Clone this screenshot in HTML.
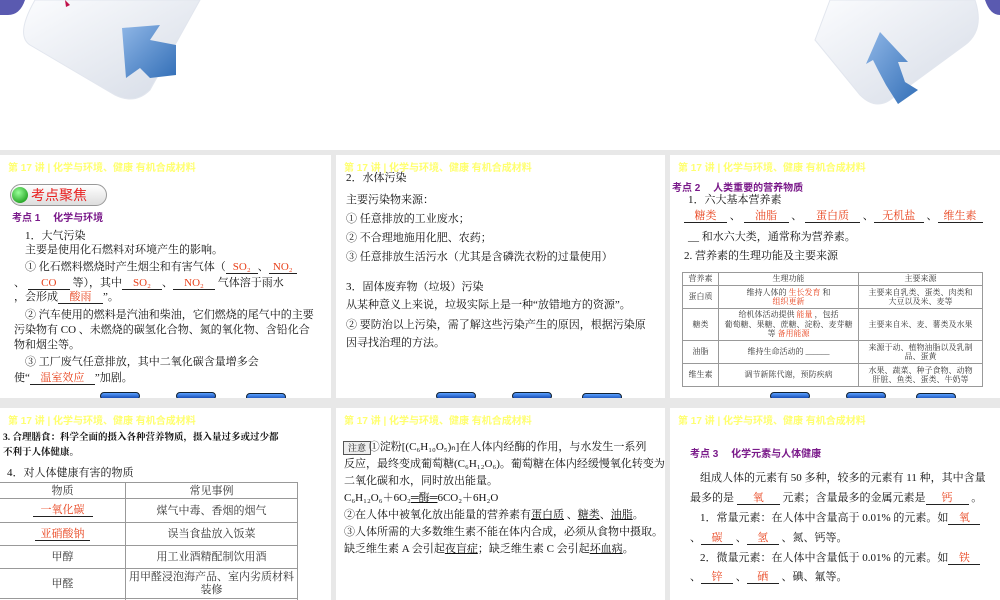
<!DOCTYPE html>
<html><head><meta charset="utf-8"><style>
*{margin:0;padding:0;box-sizing:border-box}
body{width:1000px;height:600px;overflow:hidden;background:#e8e8e8;font-family:"Liberation Serif","Noto Serif CJK SC","Noto Sans CJK SC",serif;color:#111;position:relative}
.top{position:absolute;left:0;top:0;width:1000px;height:150px;background:#fff}
.p{position:absolute;background:#fff;overflow:hidden}
.hd{position:absolute;left:8px;top:4px;font:bold 10px "Liberation Sans","Noto Sans CJK SC",sans-serif;color:#ffff70;white-space:nowrap}
.t{position:absolute;font-size:11px;line-height:18px;white-space:nowrap}
.pur{color:#7a1a8a;font-weight:bold;font-family:"Liberation Sans","Noto Sans CJK SC",sans-serif}
.r{color:#e8401a}
.u{display:inline-block;border-bottom:1px solid #222;text-align:center;line-height:12px;vertical-align:baseline}
.btn{position:absolute;width:40px;height:8px;border-radius:4px;background:linear-gradient(#5aa0ff,#0a3ea8);border:1px solid #123}
table{border-collapse:collapse;position:absolute;table-layout:fixed}
td{border:1px solid #999;text-align:center;font-size:9px;line-height:10px;color:#333;padding:0;white-space:nowrap;overflow:hidden}
.tb td{font-size:8px;line-height:9.5px}
</style></head><body>
<div class="top">
<svg width="1000" height="150" viewBox="0 0 1000 150">
<defs><linearGradient id="s" x1="0" y1="0" x2="1" y2="1"><stop offset="0" stop-color="#fbfcfe"/><stop offset="1" stop-color="#d5dbe6"/></linearGradient>
<linearGradient id="b" x1="0" y1="0" x2="1" y2="1"><stop offset="0" stop-color="#8fb6e6"/><stop offset="1" stop-color="#3470b8"/></linearGradient></defs>
<path d="M0 0 L25 0 Q20 15 8 15 L0 15Z" fill="#5a5ab0"/>
<path d="M35 0 L200 0 L150 90 Q135 105 115 95 L30 45 Q15 35 35 0Z" fill="url(#s)" stroke="#e2e6ee"/>
<path d="M122 28 L160 25 L150 40 L176 45 L176 75 L150 78 L140 68 L126 78Z" fill="url(#b)"/>
<path d="M1000 0 L1000 15 Q990 15 985 0Z" fill="#5a5ab0"/>
<path d="M830 0 L975 0 Q985 30 965 45 L890 100 Q875 110 860 95 L815 40Z" fill="url(#s)" stroke="#e2e6ee"/>
<path d="M880 32 L908 62 L898 62 L905 82 L918 90 L898 104 L886 85 L878 70 L873 60 L866 64Z" fill="url(#b)"/>
<path d="M65 0 L70 5 L66 7Z" fill="#c0104a"/>
</svg>
</div>

<!-- Panel 1 -->
<div class="p" style="left:0;top:155px;width:331px;height:243px">
<div class="hd">第 17 讲 | 化学与环境、健康 有机合成材料</div>
<div style="position:absolute;left:10px;top:29px;width:97px;height:22px;border:1px solid #999;border-radius:11px;background:linear-gradient(#fff,#ddd)"></div>
<div style="position:absolute;left:12px;top:32px;width:16px;height:16px;border-radius:50%;background:radial-gradient(circle at 40% 35%,#9f9,#080)"></div>
<div style="position:absolute;left:31px;top:30px;font:14px 'Noto Sans CJK SC',sans-serif;color:#e82020">考点聚焦</div>
<div class="t pur" style="left:12px;top:55px;font-size:10px">考点 1 　化学与环境</div>
<div class="t" style="left:25px;top:72px">1．大气污染</div>
<div class="t" style="left:25px;top:86px">主要是使用化石燃料对环境产生的影响。</div>
<div class="t" style="left:25px;top:103px">① 化石燃料燃烧时产生烟尘和有害气体（<span class="u r" style="width:32px">SO₂</span>、<span class="u r" style="width:28px">NO₂</span></div>
<div class="t" style="left:14px;top:119px">、 <span class="u r" style="width:42px">CO</span> 等），其中<span class="u r" style="width:40px">SO₂</span>、<span class="u r" style="width:42px">NO₂</span> 气体溶于雨水</div>
<div class="t" style="left:14px;top:133px">，会形成<span class="u r" style="width:45px">酸雨</span>”。</div>
<div class="t" style="left:25px;top:151px">② 汽车使用的燃料是汽油和柴油，它们燃烧的尾气中的主要</div>
<div class="t" style="left:14px;top:166px">污染物有 CO 、未燃烧的碳氢化合物、氮的氧化物、含铅化合</div>
<div class="t" style="left:14px;top:181px">物和烟尘等。</div>
<div class="t" style="left:25px;top:198px">③ 工厂废气任意排放，其中二氧化碳含量增多会</div>
<div class="t" style="left:14px;top:214px">使“<span class="u r" style="width:65px">温室效应</span>”加剧。</div>
<div class="btn" style="left:100px;top:237px"></div><div class="btn" style="left:176px;top:237px"></div><div class="btn" style="left:246px;top:238px"></div>
</div>

<!-- Panel 2 -->
<div class="p" style="left:336px;top:155px;width:329px;height:243px">
<div class="hd">第 17 讲 | 化学与环境、健康 有机合成材料</div>
<div class="t" style="left:10px;top:14px">2．水体污染</div>
<div class="t" style="left:10px;top:36px">主要污染物来源：</div>
<div class="t" style="left:10px;top:55px">① 任意排放的工业废水；</div>
<div class="t" style="left:10px;top:74px">② 不合理地施用化肥、农药；</div>
<div class="t" style="left:10px;top:93px">③ 任意排放生活污水（尤其是含磷洗衣粉的过量使用）</div>
<div class="t" style="left:10px;top:123px">3．固体废弃物（垃圾）污染</div>
<div class="t" style="left:10px;top:141px">从某种意义上来说，垃圾实际上是一种“放错地方的资源”。</div>
<div class="t" style="left:10px;top:161px">② 要防治以上污染，需了解这些污染产生的原因，根据污染原</div>
<div class="t" style="left:10px;top:179px">因寻找治理的方法。</div>
<div class="btn" style="left:100px;top:237px"></div><div class="btn" style="left:176px;top:237px"></div><div class="btn" style="left:246px;top:238px"></div>
</div>

<!-- Panel 3 -->
<div class="p" style="left:670px;top:155px;width:330px;height:243px">
<div class="hd">第 17 讲 | 化学与环境、健康 有机合成材料</div>
<div class="t pur" style="left:2px;top:25px;font-size:10px">考点 2 　人类重要的营养物质</div>
<div class="t" style="left:18px;top:36px">1．六大基本营养素</div>
<div class="t" style="left:14px;top:52px"><span class="u r" style="width:43px">糖类</span> 、 <span class="u r" style="width:45px">油脂</span> 、 <span class="u r" style="width:55px">蛋白质</span> 、<span class="u r" style="width:50px">无机盐</span> 、<span class="u r" style="width:45px">维生素</span></div>
<div class="t" style="left:18px;top:73px">__ 和水六大类，通常称为营养素。</div>
<div class="t" style="left:14px;top:92px">2. 营养素的生理功能及主要来源</div>
<table class="tb" style="left:12px;top:117px;width:301px">
<colgroup><col style="width:36px"><col style="width:140px"><col></colgroup>
<tr style="height:13px"><td>营养素</td><td>生理功能</td><td>主要来源</td></tr>
<tr style="height:23px"><td>蛋白质</td><td>维持人体的 <span class="r">生长发育</span> 和<br><span class="r">组织更新</span></td><td>主要来自乳类、蛋类、肉类和<br>大豆以及米、麦等</td></tr>
<tr style="height:32px"><td>糖类</td><td>给机体活动提供 <span class="r">能量</span> ，包括<br>葡萄糖、果糖、蔗糖、淀粉、麦芽糖<br>等 <span class="r">备用能源</span></td><td>主要来自米、麦、薯类及水果</td></tr>
<tr style="height:23px"><td>油脂</td><td>维持生命活动的 ______</td><td>来源于动、植物油脂以及乳制<br>品、蛋黄</td></tr>
<tr style="height:23px"><td>维生素</td><td>调节新陈代谢，预防疾病</td><td>水果、蔬菜、种子食物、动物<br>肝脏、鱼类、蛋类、牛奶等</td></tr>
</table>
<div class="btn" style="left:100px;top:237px"></div><div class="btn" style="left:176px;top:237px"></div><div class="btn" style="left:246px;top:238px"></div>
</div>

<!-- Row 2 -->
<div class="p" style="left:0;top:408px;width:331px;height:192px">
<div class="hd">第 17 讲 | 化学与环境、健康 有机合成材料</div>
<div class="t" style="left:3px;top:23px;font-size:9.5px;line-height:15px;font-weight:bold">3. 合理膳食：科学全面的摄入各种营养物质，摄入量过多或过少都<br>不利于人体健康。</div>
<div class="t" style="left:7px;top:56px">4．对人体健康有害的物质</div>
<table style="left:-1px;top:74px;width:299px">
<colgroup><col style="width:126px"><col></colgroup>
<tr style="height:16px"><td style="font-size:11px">物质</td><td style="font-size:11px">常见事例</td></tr>
<tr style="height:24px"><td style="font-size:11px"><span class="u r" style="width:60px">一氧化碳</span></td><td style="font-size:11px">煤气中毒、香烟的烟气</td></tr>
<tr style="height:23px"><td style="font-size:11px"><span class="u r" style="width:55px">亚硝酸钠</span></td><td style="font-size:11px">误当食盐放入饭菜</td></tr>
<tr style="height:23px"><td style="font-size:11px">甲醇</td><td style="font-size:11px">用工业酒精配制饮用酒</td></tr>
<tr style="height:30px"><td style="font-size:11px">甲醛</td><td style="font-size:11px;line-height:13px">用甲醛浸泡海产品、室内劣质材料<br>装修</td></tr>
<tr style="height:20px"><td></td><td></td></tr>
</table>
</div>

<div class="p" style="left:336px;top:408px;width:329px;height:192px">
<div class="hd">第 17 讲 | 化学与环境、健康 有机合成材料</div>
<div style="position:absolute;left:7px;top:33px;width:28px;height:14px;border:1px solid #555;background:#eee;font-size:9px;line-height:12px;text-align:center">注意</div>
<div class="t" style="left:8px;top:31px;line-height:17px">　　 ①淀粉[(C₆H₁₀O₅)ₙ]在人体内经酶的作用，与水发生一系列<br>反应，最终变成葡萄糖(C₆H₁₂O₆)。葡萄糖在体内经缓慢氧化转变为<br>二氧化碳和水，同时放出能量。<br>C₆H₁₂O₆＋6O₂<u>═酶═</u>6CO₂＋6H₂O<br>②在人体中被氧化放出能量的营养素有<u>蛋白质</u> 、<u>糖类</u>、<u>油脂</u>。<br>③人体所需的大多数维生素不能在体内合成，必须从食物中摄取。<br>缺乏维生素 A 会引起<u>夜盲症</u>；缺乏维生素 C 会引起<u>坏血病</u>。</div>
</div>

<div class="p" style="left:670px;top:408px;width:330px;height:192px">
<div class="hd">第 17 讲 | 化学与环境、健康 有机合成材料</div>
<div class="t pur" style="left:20px;top:38px;font-size:10px">考点 3 　化学元素与人体健康</div>
<div class="t" style="left:30px;top:61px">组成人体的元素有 50 多种，较多的元素有 11 种，其中含量</div>
<div class="t" style="left:20px;top:81px">最多的是 <span class="u r" style="width:43px">氧</span> 元素；含量最多的金属元素是<span class="u r" style="width:43px">钙</span> 。</div>
<div class="t" style="left:30px;top:101px">1．常量元素：在人体中含量高于 0.01% 的元素。如<span class="u r" style="width:32px">氧</span></div>
<div class="t" style="left:20px;top:121px">、<span class="u r" style="width:32px">碳</span> 、<span class="u r" style="width:32px">氢</span> 、氮、钙等。</div>
<div class="t" style="left:30px;top:141px">2．微量元素：在人体中含量低于 0.01% 的元素。如<span class="u r" style="width:32px">铁</span></div>
<div class="t" style="left:20px;top:160px">、<span class="u r" style="width:32px">锌</span> 、<span class="u r" style="width:32px">硒</span> 、碘、氟等。</div>
</div>
</body></html>
